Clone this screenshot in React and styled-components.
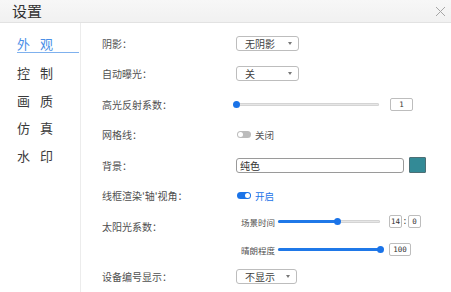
import React from "react"
import styled, { createGlobalStyle } from "styled-components"

const GlobalStyle = createGlobalStyle`
  html, body {
    margin: 0;
    padding: 0;
    background: #fff;
    overflow: hidden;
  }
  body {
    font-family: "Noto Sans CJK SC", "Noto Sans", sans-serif;
    color: #333;
  }
`

const Window = styled.div`
  width: 451px;
  height: 292px;
  display: flex;
  flex-direction: column;
  background: #fff;
  overflow: hidden;
`

const TitleBar = styled.div`
  height: 22px;
  flex: none;
  display: flex;
  align-items: center;
  justify-content: space-between;
  padding: 0 5px 0 12px;
  background: linear-gradient(#f7f7f7, #f1f1f1);
  border-bottom: 1px solid #e2e2e2;
`

const Title = styled.div`
  font-size: 15px;
  line-height: 22px;
  color: #333;
`

const Close = styled.svg`
  width: 11px;
  height: 11px;
  display: block;
`

const Body = styled.div`
  flex: 1;
  display: flex;
  min-height: 0;
`

const Sidebar = styled.ul`
  width: 81px;
  flex: none;
  margin: 0;
  padding: 9px 0 0 17px;
  box-sizing: border-box;
  list-style: none;
  border-right: 1px solid #ececec;
`

const NavItem = styled.li`
  height: 27.5px;
  display: flex;
  align-items: center;
`

const NavText = styled.span`
  width: 62px;
  box-sizing: border-box;
  font-size: 13px;
  line-height: 14px;
  letter-spacing: 10px;
  color: ${p => (p.$active ? "#4a8fe7" : "#3a3a3a")};
  padding-bottom: ${p => (p.$active ? "1px" : "0")};
  margin-top: ${p => (p.$active ? "-1px" : "0")};
  border-bottom: ${p => (p.$active ? "1.5px solid #7fb1ee" : "none")};
`

const Content = styled.div`
  flex: 1;
  padding: 5px 0 0 21px;
  display: flex;
  flex-direction: column;
`

const Row = styled.div`
  display: flex;
  align-items: ${p => (p.$top ? "flex-start" : "center")};
  min-height: 30.5px;
  padding-bottom: ${p => p.$pb || 0}px;
`

const Label = styled.div`
  width: 134px;
  flex: none;
  font-size: 10px;
  line-height: ${p => (p.$top ? "31px" : "normal")};
  color: #505050;
`

const Select = styled.div`
  width: ${p => p.$w}px;
  height: 15px;
  box-sizing: border-box;
  border: 1px solid #bdbdbd;
  border-radius: 3px;
  display: flex;
  align-items: center;
  justify-content: space-between;
  padding: 0 6px 0 8px;
  font-size: 10px;
  color: #404040;
  background: #fff;

  &::after {
    content: "";
    border-left: 2.5px solid transparent;
    border-right: 2.5px solid transparent;
    border-top: 3px solid #777;
  }
`

const Slider = styled.div`
  position: relative;
  width: ${p => p.$w}px;
  height: 3px;
  border-radius: 2px;
  background: #e6e6e6;
  box-shadow: inset 0 0 0 1px #d4d4d4;
`

const Fill = styled.div`
  position: absolute;
  left: 0;
  top: 0;
  bottom: 0;
  border-radius: 2px;
  background: #1f78e8;
`

const Thumb = styled.div`
  position: absolute;
  top: 50%;
  width: 7px;
  height: 7px;
  margin: -3.5px 0 0 -3.5px;
  border-radius: 50%;
  background: #1a73e8;
`

const NumBox = styled.div`
  width: ${p => p.$w}px;
  height: 13px;
  box-sizing: border-box;
  border: 1px solid #bdbdbd;
  border-radius: 2px;
  display: flex;
  align-items: center;
  justify-content: center;
  font-family: "DejaVu Sans Mono", monospace;
  font-size: 7.5px;
  color: #333;
  background: #fff;
`

const Inline = styled.div`
  display: flex;
  align-items: center;
  gap: ${p => p.$gap || 0}px;
`

const Toggle = styled.div`
  display: flex;
  align-items: center;
  gap: 4px;
  font-size: 9.5px;
  color: ${p => (p.$on ? "#1a73e8" : "#555")};
  margin-left: 1px;
`

const Track = styled.div`
  width: 14px;
  height: 7px;
  border-radius: 4px;
  background: ${p => (p.$on ? "#1a73e8" : "#bcbcbc")};
  display: flex;
  align-items: center;
  justify-content: ${p => (p.$on ? "flex-end" : "flex-start")};
  padding: 0 1px;
  box-sizing: border-box;

  &::before {
    content: "";
    width: 5px;
    height: 5px;
    border-radius: 50%;
    background: #fff;
  }
`

const TextInput = styled.div`
  width: 168px;
  height: 15px;
  box-sizing: border-box;
  border: 1px solid #9a9a9a;
  border-radius: 3px;
  display: flex;
  align-items: center;
  padding-left: 3px;
  font-size: 10px;
  color: #333;
`

const Swatch = styled.div`
  width: 17px;
  height: 16px;
  box-sizing: border-box;
  background: ${p => p.$color};
  border: 1px solid #4d6f75;
  border-radius: 1px;
`

const SubRows = styled.div`
  display: flex;
  flex-direction: column;
  gap: 7px;
  margin-left: 5px;
`

const SubRow = styled.div`
  display: flex;
  align-items: center;
  height: 21px;
`

const SubLabel = styled.div`
  width: 37px;
  font-size: 8.5px;
  color: #505050;
`

const Colon = styled.span`
  font-family: "DejaVu Sans Mono", monospace;
  font-size: 8px;
  width: 6px;
  text-align: center;
`

const nav = ["外观", "控制", "画质", "仿真", "水印"]

const RangeSlider = ({ width, value }) => (
  <Slider $w={width}>
    <Fill style={{ width: `${value}%` }} />
    <Thumb style={{ left: `${value}%` }} />
  </Slider>
)

export default function App() {
  return (
    <Window>
      <GlobalStyle />
      <TitleBar>
        <Title>设置</Title>
        <Close viewBox="0 0 11 11">
          <path d="M1 1 L10 10 M10 1 L1 10" stroke="#a6a6a6" strokeWidth="1" fill="none" />
        </Close>
      </TitleBar>
      <Body>
        <Sidebar>
          {nav.map((n, i) => (
            <NavItem key={n}>
              <NavText $active={i === 0}>{n}</NavText>
            </NavItem>
          ))}
        </Sidebar>
        <Content>
          <Row>
            <Label>阴影：</Label>
            <Select $w={63}>无阴影</Select>
          </Row>
          <Row>
            <Label>自动曝光：</Label>
            <Select $w={63}>关</Select>
          </Row>
          <Row>
            <Label>高光反射系数：</Label>
            <Inline $gap={11}>
              <RangeSlider width={143} value={0} />
              <NumBox $w={23}>1</NumBox>
            </Inline>
          </Row>
          <Row>
            <Label>网格线：</Label>
            <Toggle>
              <Track />
              关闭
            </Toggle>
          </Row>
          <Row>
            <Label>背景：</Label>
            <Inline $gap={5}>
              <TextInput>纯色</TextInput>
              <Swatch $color="#338a96" />
            </Inline>
          </Row>
          <Row>
            <Label>线框渲染'轴'视角：</Label>
            <Toggle $on>
              <Track $on />
              开启
            </Toggle>
          </Row>
          <Row $top $pb={8}>
            <Label $top>太阳光系数：</Label>
            <SubRows>
              <SubRow>
                <SubLabel>场景时间</SubLabel>
                <Inline $gap={9}>
                  <RangeSlider width={102} value={58} />
                  <Inline>
                    <NumBox $w={13}>14</NumBox>
                    <Colon>:</Colon>
                    <NumBox $w={13}>0</NumBox>
                  </Inline>
                </Inline>
              </SubRow>
              <SubRow>
                <SubLabel>晴朗程度</SubLabel>
                <Inline $gap={9}>
                  <RangeSlider width={102} value={100} />
                  <NumBox $w={22}>100</NumBox>
                </Inline>
              </SubRow>
            </SubRows>
          </Row>
          <Row>
            <Label>设备编号显示：</Label>
            <Select $w={61}>不显示</Select>
          </Row>
        </Content>
      </Body>
    </Window>
  )
}
